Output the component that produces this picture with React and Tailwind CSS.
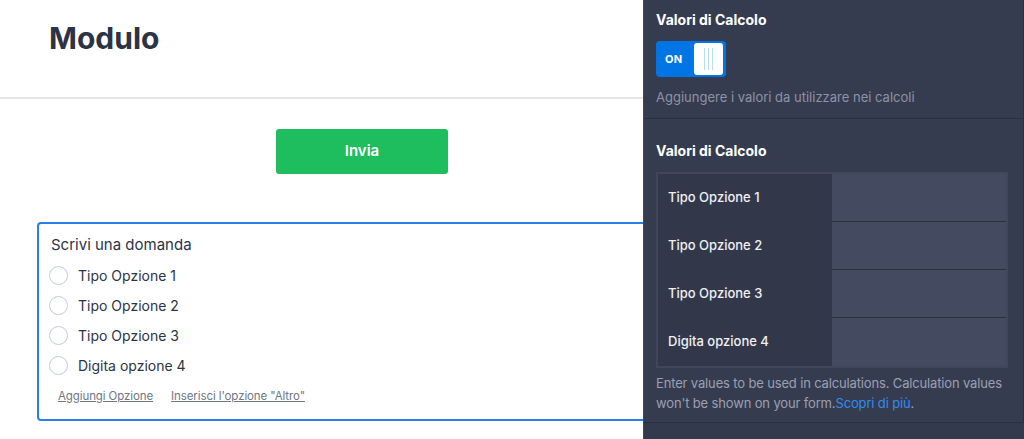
import React from 'react';

const options = ['Tipo Opzione 1', 'Tipo Opzione 2', 'Tipo Opzione 3', 'Digita opzione 4'];

const Toggle = () => (
  <div className="flex h-[36px] w-[70px] items-center rounded-[4px] bg-[#0075e3] pl-[9px] pr-[3px]">
    <span className="text-[11px] font-bold tracking-wide text-white">ON</span>
    <div className="ml-auto flex h-[32px] w-[29px] items-center justify-center gap-[3px] rounded-[3px] bg-white">
      <span className="h-[22px] w-px bg-[#b9dcf7]" />
      <span className="h-[22px] w-px bg-[#b9dcf7]" />
      <span className="h-[22px] w-px bg-[#b9dcf7]" />
    </div>
  </div>
);

const CalcPanel = () => (
  <aside className="absolute right-0 top-0 flex h-full w-[381px] flex-col border-l border-[#414759] bg-[#363c50] font-['Inter',sans-serif]">
    {/* toggle section */}
    <section className="h-[119px] border-b border-r border-[#2b3041] px-[12px] pt-[11px]">
      <h3 className="text-[14px] font-bold leading-[18px] text-white">Valori di Calcolo</h3>
      <div className="mt-[12px]">
        <Toggle />
      </div>
      <p className="mt-[11px] text-[13px] leading-[18px] text-[#8d93a6]">Aggiungere i valori da utilizzare nei calcoli</p>
    </section>

    {/* values table */}
    <section className="h-[304px] border-b border-r border-[#2b3041] pl-[12px] pr-[4px] pt-[23px]">
      <h3 className="text-[14px] font-bold leading-[18px] text-white">Valori di Calcolo</h3>
      <div className="mt-[12px] w-[352px] border-2 border-[#40465b]">
        {options.map((o, i) => (
          <div key={o} className="flex h-[48px]">
            <div className="flex w-[174px] items-center bg-[#323849] pl-[10px] text-[13px] font-medium text-[#eef0f4]">{o}</div>
            <div className={`flex-1 bg-[#444a60] ${i < options.length - 1 ? 'border-b border-[#2c3142]' : ''}`} />
          </div>
        ))}
      </div>
      <p className="mt-[5px] text-[13px] leading-[20px] tracking-[-0.15px] text-[#9aa0b2]">
        Enter values to be used in calculations. Calculation values won't be shown on your form.<span className="text-[#2f8cf0]">Scopri di più</span>.
      </p>
    </section>
    <div className="flex-1 bg-[#333a4d]" />
  </aside>
);

export default function App() {
  return (
    <div className="relative h-[439px] w-[1024px] overflow-hidden bg-white font-['Inter',sans-serif]">
      <header className="flex h-[99px] items-start border-b-2 border-[#e3e5eb] pl-[49px] pt-[19px]">
        <h1 className="text-[30px] font-bold leading-[38px] text-[#2c3345]">Modulo</h1>
      </header>

      <div className="pl-[276px] pt-[30px]">
        <button className="h-[45px] w-[172px] rounded-[3px] bg-[#1ebd5d] text-[15px] font-semibold text-white">Invia</button>
      </div>

      <div className="ml-[37px] mt-[48px] h-[199px] w-[950px] rounded-[4px] border-2 border-[#2b7de9] pl-[10px] pt-[10px]">
        <p className="pl-[2px] text-[15px] leading-[22px] text-[#2c3345]">Scrivi una domanda</p>
        <ul className="mt-[9px] flex flex-col gap-[10px]">
          {options.map((o) => (
            <li key={o} className="flex h-[20px] items-center gap-[10px]">
              <span className="h-[19px] w-[19px] rounded-full border border-[#c3cad8] bg-white" />
              <span className="text-[14px] text-[#2c3345]">{o}</span>
            </li>
          ))}
        </ul>
        <div className="mt-[13px] flex gap-[18px] pl-[9px] text-[11.5px] tracking-[-0.1px] text-[#6f7687]">
          <span className="underline">Aggiungi Opzione</span>
          <span className="underline">Inserisci l'opzione "Altro"</span>
        </div>
      </div>

      <CalcPanel />
    </div>
  );
}
